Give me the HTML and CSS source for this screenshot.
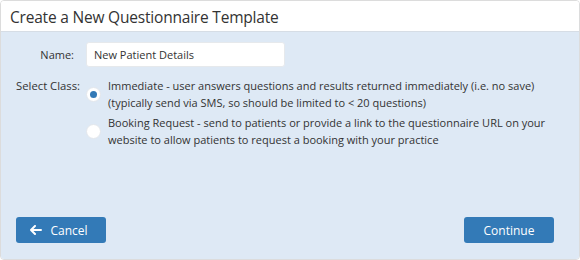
FILE: index.html
```html
<!DOCTYPE html>
<html>
<head>
<meta charset="utf-8">
<link rel="stylesheet" href="styles.css">
</head>
<body>
<div class="panel">
  <div class="panel-head">Create a New Questionnaire Template</div>
  <div class="panel-body">
    <div class="row name-row">
      <label class="lbl">Name:</label>
      <input class="txt" type="text" value="New Patient Details">
    </div>
    <div class="row class-row">
      <div class="lbl">Select Class:</div>
      <div class="options">
        <div class="opt">
          <span class="radio on"></span>
          <span class="opt-text">Immediate - user answers questions and results returned immediately (i.e. no save)<br>(typically send via SMS, so should be limited to &lt; 20 questions)</span>
        </div>
        <div class="opt">
          <span class="radio"></span>
          <span class="opt-text">Booking Request - send to patients or provide a link to the questionnaire URL on your<br>website to allow patients to request a booking with your practice</span>
        </div>
      </div>
    </div>
    <div class="actions">
      <button class="btn"><svg class="arrow" width="12" height="10" viewBox="0 0 12 10"><path d="M5 1 1 5l4 4M1 5h10" fill="none" stroke="#fff" stroke-width="2" stroke-linecap="round" stroke-linejoin="round"/></svg>Cancel</button>
      <button class="btn">Continue</button>
    </div>
  </div>
</div>
</body>
</html>
```
FILE: styles.css
```css
* { box-sizing: border-box; }
body {
  margin: 0;
  background: #fff;
  font-family: "Open Sans", "Noto Sans", sans-serif;
  color: #333;
}
.panel {
  width: 580px;
  height: 260px;
  border: 1px solid #dcdcdc;
  border-radius: 4px;
  display: flex;
  flex-direction: column;
  overflow: hidden;
}
.panel-head {
  height: 31px;
  background: #fff;
  border-bottom: 1px solid #d6dde5;
  padding: 5px 9px 0;
  font-size: 15.5px;
  letter-spacing: -0.2px;
  color: #333;
}
.panel-body {
  flex: 1;
  background: #dee9f5;
  padding: 10px 15px 16px;
  display: flex;
  flex-direction: column;
  font-size: 11px;
}
.row { display: flex; }
.lbl {
  width: 58px;
  text-align: right;
  flex: none;
  white-space: nowrap;
}
.name-row { align-items: center; }
.txt {
  margin-left: 12px;
  width: 199px;
  height: 25px;
  border: 1px solid #e6e9ec;
  border-radius: 3px;
  padding: 0 7px;
  font-family: inherit;
  font-size: 11px;
  color: #333;
  background: #fff;
  outline: none;
}
.class-row { margin-top: 10px; }
.class-row .lbl { line-height: 17px; font-size: 11.3px; }
.options {
  margin-left: 12px;
  display: flex;
  flex-direction: column;
  gap: 3px;
}
.opt { display: flex; align-items: center; }
.opt-text { line-height: 17px; margin-left: 7px; }
.radio {
  flex: none;
  width: 15px;
  height: 15px;
  border-radius: 50%;
  background: #fff;
  border: 1px solid #e3e7ec;
  display: flex;
  align-items: center;
  justify-content: center;
}
.radio.on::after {
  content: "";
  width: 7px;
  height: 7px;
  border-radius: 50%;
  background: #337ab7;
}
.actions {
  margin-top: auto;
  display: flex;
  justify-content: space-between;
  padding-right: 10px;
}
.btn {
  width: 90px;
  height: 26px;
  background: #337ab7;
  border: none;
  border-radius: 3px;
  color: #fff;
  font-family: inherit;
  font-size: 12px;
  display: flex;
  align-items: center;
  justify-content: center;
  gap: 8px;
}
.arrow { margin-left: -4px; }
```
